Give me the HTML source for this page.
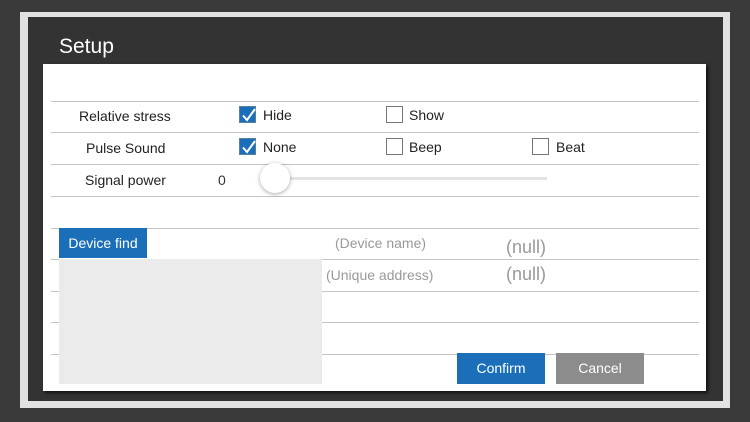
<!DOCTYPE html>
<html><head><style>
body{margin:0;width:750px;height:422px;background:#3a3a3a;position:relative;overflow:hidden;font-family:"Liberation Sans",sans-serif;}
.a{position:absolute}
.line{position:absolute;left:51px;width:648px;height:1px;background:#c4c4c4}
.lbl{position:absolute;font-size:14px;color:#222}
.cb{position:absolute;width:17px;height:17px;box-sizing:border-box;border:1.5px solid #777;background:#fff}
.cb.on{background:#1a6fb8;border-color:#5a7fa0}
.cb svg{position:absolute;left:0;top:0}
</style></head><body>
<div class="a" style="left:20px;top:12px;width:710px;height:396px;background:#e2e2e2"></div>
<div class="a" style="left:28px;top:17px;width:695px;height:384px;background:#333"></div>
<div class="a" style="left:59px;top:35px;color:#fff;font-size:21px">Setup</div>
<div class="a" style="left:43px;top:64px;width:663px;height:327px;background:#fff;box-shadow:2px 2px 3px #111"></div>
<div class="line" style="top:101px"></div>
<div class="line" style="top:132px"></div>
<div class="line" style="top:164px"></div>
<div class="line" style="top:196px"></div>
<div class="line" style="top:228px"></div>
<div class="line" style="top:259px"></div>
<div class="line" style="top:291px"></div>
<div class="line" style="top:322px"></div>
<div class="line" style="top:354px"></div>
<div class="lbl" style="left:79px;top:108px">Relative stress</div>
<div class="lbl" style="left:86px;top:140px">Pulse Sound</div>
<div class="lbl" style="left:85px;top:172px">Signal power</div>
<div class="lbl" style="left:218px;top:172px;color:#333">0</div>
<div class="cb on" style="left:239px;top:106px"><svg width="17" height="17"><path d="M3 8.5 L7 13 L15 2" stroke="#fff" stroke-width="2" fill="none"/></svg></div>
<div class="lbl" style="left:263px;top:107px">Hide</div>
<div class="cb" style="left:386px;top:106px"></div>
<div class="lbl" style="left:409px;top:107px">Show</div>
<div class="cb on" style="left:239px;top:138px"><svg width="17" height="17"><path d="M3 8.5 L7 13 L15 2" stroke="#fff" stroke-width="2" fill="none"/></svg></div>
<div class="lbl" style="left:263px;top:139px">None</div>
<div class="cb" style="left:386px;top:138px"></div>
<div class="lbl" style="left:409px;top:139px">Beep</div>
<div class="cb" style="left:532px;top:138px"></div>
<div class="lbl" style="left:556px;top:139px">Beat</div>
<div class="a" style="left:275px;top:177px;width:272px;height:3px;background:#e4e4e4"></div>
<div class="a" style="left:260px;top:163px;width:30px;height:30px;border-radius:50%;background:#fff;box-shadow:0 1px 4px rgba(0,0,0,.35)"></div>
<div class="a" style="left:59px;top:228px;width:88px;height:30px;background:#1a6fb8;color:#fff;font-size:14px;line-height:30px;text-align:center">Device find</div>
<div class="a" style="left:59px;top:259px;width:263px;height:125px;background:#ebebeb"></div>
<div class="a" style="left:335px;top:235px;font-size:14px;color:#999">(Device name)</div>
<div class="a" style="left:326px;top:267px;font-size:14px;color:#999">(Unique address)</div>
<div class="a" style="left:506px;top:237px;font-size:18px;color:#999">(null)</div>
<div class="a" style="left:506px;top:264px;font-size:18px;color:#999">(null)</div>
<div class="a" style="left:457px;top:353px;width:88px;height:31px;background:#1a6fb8;color:#fff;font-size:14px;line-height:31px;text-align:center">Confirm</div>
<div class="a" style="left:556px;top:353px;width:88px;height:31px;background:#8c8c8c;color:#fff;font-size:14px;line-height:31px;text-align:center">Cancel</div>
</body></html>
